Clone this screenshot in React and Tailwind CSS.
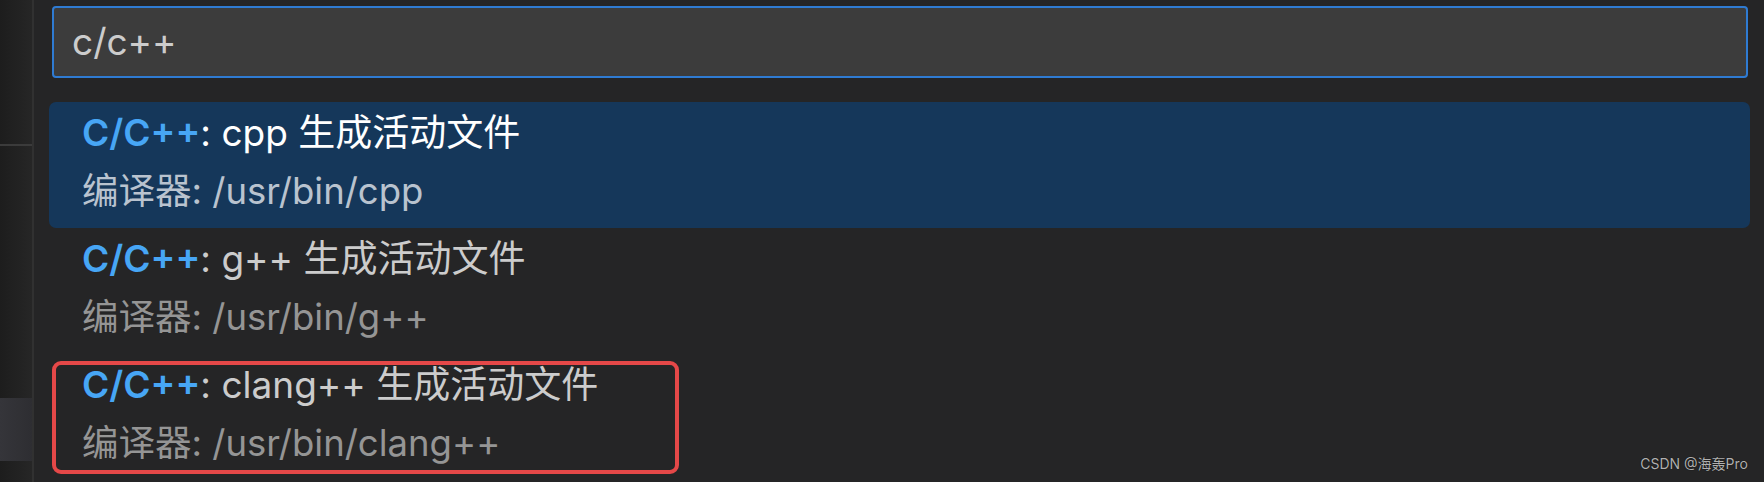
const font = { fontFamily: 'Inter, "Noto Sans CJK SC", sans-serif' };

const items = [
  { tool: 'cpp', path: '/usr/bin/cpp', active: true },
  { tool: 'g++', path: '/usr/bin/g++' },
  { tool: 'clang++', path: '/usr/bin/clang++', marked: true },
];

const Row = ({ item }) => (
  <div
    className={`relative h-[126px] pl-[33px] pt-[2px] rounded-[7px] ${
      item.active ? 'bg-[#15375a]' : ''
    }`}
  >
    <div className={`h-[58px] leading-[58px] text-[37px] ${item.active ? 'text-white' : 'text-[#cccccc]'}`}>
      <span className="font-semibold text-[#47a6f5]">C/C++</span>: {item.tool} 生成活动文件
    </div>
    <div className={`h-[58px] leading-[58px] text-[36.5px] ${item.active ? 'text-[#b9c3cf]' : 'text-[#959595]'}`}>
      编译器: {item.path}
    </div>
    {item.marked && (
      <div className="absolute left-[3px] top-[7px] w-[627px] h-[113px] border-4 border-[#e54848] rounded-[9px]" />
    )}
  </div>
);

export default function App() {
  return (
    <div className="w-[1764px] h-[482px] bg-[#252526] flex overflow-hidden" style={font}>
      <div className="w-[34px] shrink-0 flex flex-col bg-gradient-to-r from-[#1d1d1d] to-[#262626] border-r-2 border-[#313131]">
        <div className="h-[144px]" />
        <div className="h-[2px] bg-[#3b3b3b]" />
        <div className="h-[252px]" />
        <div className="h-[63px] bg-gradient-to-r from-[#35353a] to-[#2e2e32]" />
      </div>

      <div className="relative flex-1 flex flex-col">
        <div className="mt-[6px] ml-[18px] mr-[16px] h-[72px] bg-[#3c3c3c] border-2 border-[#2f7bd2] rounded-[4px] flex items-center pl-[18px] text-[37px] text-[#cccccc]">
          c/c++
        </div>

        <div className="mt-[24px] ml-[15px] mr-[14px] flex flex-col">
          {items.map((item) => (
            <Row key={item.tool} item={item} />
          ))}
        </div>

        <div className="absolute right-[16px] bottom-[8px] text-[14px] text-[#b0b0b0] [text-shadow:0_0_1px_#000]">
          CSDN @海轰Pro
        </div>
      </div>
    </div>
  );
}
